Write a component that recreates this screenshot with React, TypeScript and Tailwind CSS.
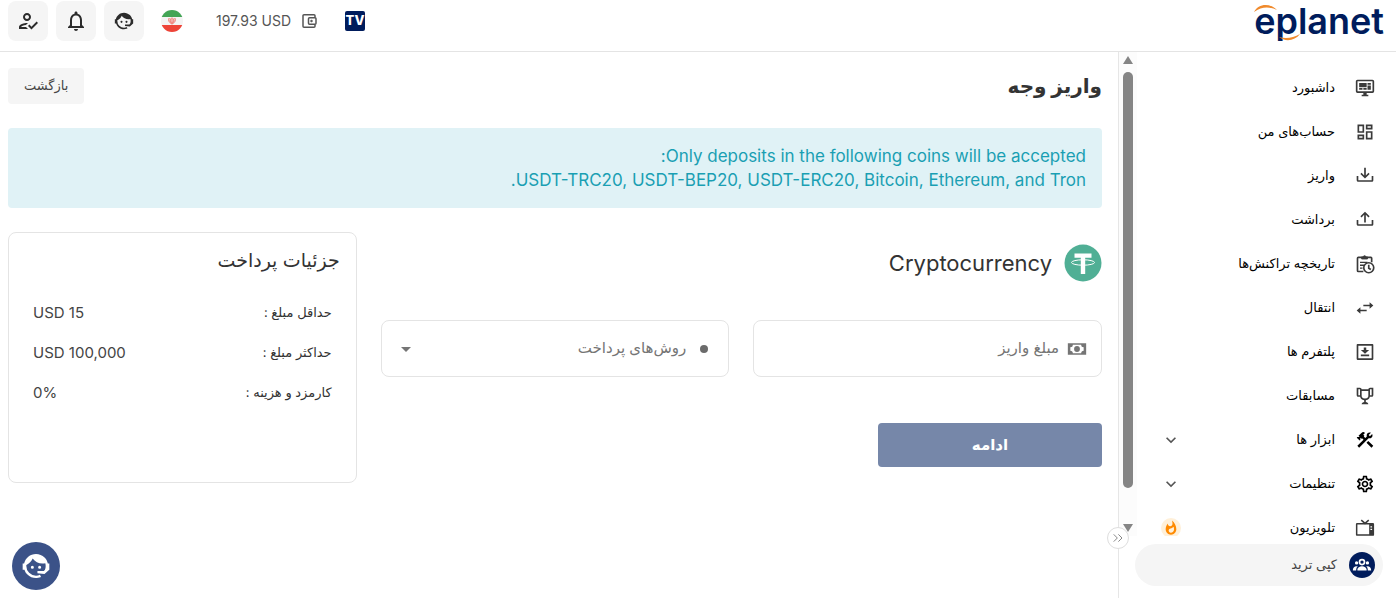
import type { ReactNode } from "react";
import {
  MdArrowDropDown,
  MdConstruction,
  MdExpandMore,
  MdNotificationsNone,
  MdOutlineDashboard,
  MdOutlineHowToReg,
  MdOutlineSettings,
  MdWhatshot,
} from "react-icons/md";
import { ChevronsRight } from "lucide-react";
import clsx from "clsx";

function MdiIcon({ d, className = "size-5" }: { d: string; className?: string }) {
  return (
    <svg viewBox="0 0 24 24" fill="currentColor" className={clsx("shrink-0", className)} aria-hidden="true">
      <path d={d} />
    </svg>
  );
}

const PATHS = {
  monitor:
    "M21 16V4H3v12h18m0-14a2 2 0 0 1 2 2v12a2 2 0 0 1-2 2h-7v2h2v2H8v-2h2v-2H3a2 2 0 0 1-2-2V4c0-1.110.9-2 2-2h18M5 6h9v5H5V6m10 0h4v2h-4V6m4 3v5h-4V9h4M5 12h4v2H5v-2m5 0h4v2h-4v-2z",
  trayDown:
    "M2 12h2v5h16v-5h2v5c0 1.110-.89 2-2 2H4a2 2 0 0 1-2-2v-5m10 3l5.550-5.460l-1.420-1.410L13 11.250V2h-2v9.250L7.880 8.130L6.460 9.550L12 15z",
  trayUp:
    "M2 12h2v5h16v-5h2v5c0 1.110-.89 2-2 2H4a2 2 0 0 1-2-2v-5M12 2L6.460 7.460l1.420 1.420L11 5.750V15h2V5.750l3.130 3.130l1.420-1.430L12 2z",
  swap: "M22 9l-4.500-4v3H10v2h7.500v3L22 9M6.500 11L2 15l4.500 4v-3H14v-2H6.500v-3z",
  downloadBox:
    "M3 2.500h18a1 1 0 0 1 1 1v17a1 1 0 0 1-1 1H3a1 1 0 0 1-1-1v-17a1 1 0 0 1 1-1m1 2v15h16v-15H4m3 10.500h10v2H7v-2m3.500-8.500h3v3H17l-5 4.500l-5-4.500h3.500v-3z",
  trophy:
    "M18 2c-.9 0-2 1-2 2H8c0-1-1.100-2-2-2H2v9c0 1 1 2 2 2h2.200c.4 2 1.700 3.700 4.800 4v2.080C8 19.540 8 22 8 22h8s0-2.460-3-2.920V17c3.100-.3 4.400-2 4.800-4H20c1 0 2-1 2-2V2h-4M6 11H4V4h2v7m10 .5c0 1.930-.58 3.500-4 3.500c-3.410 0-4-1.570-4-3.500V6h8v5.500m4-.5h-2V4h2v7z",
  cash: "M1 5h22v14H1V5m6 2a3 3 0 0 1-3 3v4a3 3 0 0 1 3 3h10a3 3 0 0 1 3-3v-4a3 3 0 0 1-3-3H7m5 1.500a3.500 3.500 0 1 1 0 7a3.500 3.500 0 0 1 0-7z",
  faceAgent:
    "M18.72,14.76C19.07,13.91 19.26,13 19.26,12C19.26,11.28 19.15,10.59 18.96,9.95C18.31,10.1 17.63,10.18 16.92,10.18C13.86,10.18 11.15,8.67 9.5,6.34C8.61,8.5 6.91,10.26 4.77,11.22C4.73,11.47 4.73,11.74 4.73,12A7.27,7.27 0 0,0 12,19.27C13.05,19.27 14.06,19.04 14.97,18.63C15.54,19.72 15.8,20.26 15.78,20.26C14.14,20.81 12.87,21.08 12,21.08C9.58,21.08 7.27,20.13 5.57,18.42C4.53,17.38 3.76,16.11 3.33,14.73H2V10.18H3.09C3.93,6.04 7.6,2.92 12,2.92C14.4,2.92 16.71,3.87 18.42,5.58C19.69,6.84 20.54,8.45 20.89,10.18H22V14.73H21.94L18.38,18L13.08,17.4V15.73H17.91L18.72,14.76M9.27,11.77A1.14,1.14 0 1,1 9.27,14.05A1.14,1.14 0 1,1 9.27,11.77M14.72,11.77A1.14,1.14 0 1,1 14.72,14.05A1.14,1.14 0 1,1 14.72,11.77Z",
};

function ClipboardClock() {
  return (
    <svg viewBox="0 0 24 24" fill="none" stroke="currentColor" strokeWidth="2" className="size-5 shrink-0" aria-hidden="true">
      <path d="M10 21H4a1 1 0 0 1-1-1V5a1 1 0 0 1 1-1h15a1 1 0 0 1 1 1v5" />
      <path d="M8 6V3.500h2a1.500 1.500 0 0 1 3 0h2V6z" fill="currentColor" strokeWidth="1" />
      <path d="M6 10h9M6 13.500h5M6 17h3" strokeWidth="1.600" />
      <circle cx="16.500" cy="16.500" r="6" />
      <path d="M16.500 13v4l2.500 1.500" />
    </svg>
  );
}

function RetroTv() {
  return (
    <svg viewBox="0 0 24 24" fill="none" stroke="currentColor" strokeWidth="1.800" className="size-5 shrink-0" aria-hidden="true">
      <rect x="2" y="7" width="20" height="13.500" rx="0.500" />
      <path d="M7.500 2.500l4.500 4l4.500-4" />
      <path d="M17 7h5v13.500h-5z" fill="currentColor" stroke="none" />
      <path d="M18.500 10.500h2M18.500 13.500h2" stroke="#fff" strokeWidth="1.500" />
    </svg>
  );
}

function GroupIcon() {
  return (
    <svg viewBox="0 0 24 24" fill="currentColor" className="size-5" aria-hidden="true">
      <circle cx="12" cy="8.500" r="3" fill="none" stroke="currentColor" strokeWidth="2" />
      <circle cx="5.500" cy="9.500" r="2" />
      <circle cx="18.500" cy="9.500" r="2" />
      <path d="M6.500 18.500v-1c0-2.500 2.500-4 5.500-4s5.500 1.500 5.500 4v1z" />
      <path d="M1 18.500c0-3 1.500-5.500 6-5c-1.500 1.300-2 3-2 5zM23 18.500c0-3-1.500-5.500-6-5c1.500 1.300 2 3 2 5z" />
    </svg>
  );
}

function WalletIcon() {
  return (
    <svg viewBox="0 0 16 16" fill="none" stroke="currentColor" strokeWidth="1.500" className="size-4" aria-hidden="true">
      <path d="M14 4.500V2.800a1 1 0 0 0-1-1H3a1 1 0 0 0-1 1v10.400a1 1 0 0 0 1 1h10a1 1 0 0 0 1-1v-1.700" />
      <rect x="7.500" y="4.700" width="7.500" height="6.600" rx="1" />
      <circle cx="10.500" cy="8" r="1" fill="currentColor" strokeWidth="0.500" />
    </svg>
  );
}

function IranFlag() {
  return (
    <svg viewBox="0 0 24 24" className="size-6" role="img" aria-label="Iran">
      <clipPath id="flag">
        <circle cx="12" cy="12" r="11" />
      </clipPath>
      <g clipPath="url(#flag)">
        <path fill="#f4f4f4" d="M0 0h24v24H0z" />
        <path fill="#43a556" d="M0 0h24v8H0z" />
        <path fill="#ee4438" d="M0 16h24v8H0z" />
        <path
          d="M12 8.500v7M9.200 9c-1.200 2 0 5 2.300 5.500M14.800 9c1.200 2 0 5-2.300 5.500M10.800 9.500c-.9 1.500-.6 3 .6 4M13.200 9.500c.9 1.500.6 3-.6 4"
          stroke="#ee5a50"
          strokeWidth="0.900"
          fill="none"
        />
      </g>
    </svg>
  );
}

function TetherIcon() {
  return (
    <svg viewBox="0 0 38 38" className="size-[38px] shrink-0" aria-hidden="true">
      <circle cx="19" cy="19" r="18.500" fill="#50af95" />
      <path d="M10.500 9.500h17v4.300h-6.300V30h-4.400V13.800h-6.300z" fill="#fff" />
      <ellipse cx="19" cy="18.500" rx="11.500" ry="2.700" fill="none" stroke="#fff" strokeWidth="1" />
    </svg>
  );
}

function Logo() {
  return (
    <a href="/" className="relative block text-4xl leading-10 font-semibold text-[#001c5c]" dir="ltr">
      eplanet
      <svg viewBox="0 0 128 40" className="absolute top-0 left-0 h-10 w-32" fill="none" aria-hidden="true">
        <path d="M0 11C4 3 15 1 23 9C15 5.500 8 5.500 0 11z" fill="#f08a2c" />
        <path d="M25 36C31 41 41 40 46 33C39 37 32 38 25 36z" fill="#f08a2c" />
      </svg>
    </a>
  );
}

type NavItem = { label: string; icon: ReactNode; expandable?: boolean; hot?: boolean };

const NAV: NavItem[] = [
  { label: "داشبورد", icon: <MdiIcon d={PATHS.monitor} /> },
  { label: "حساب‌های من", icon: <MdOutlineDashboard className="size-5" /> },
  { label: "واریز", icon: <MdiIcon d={PATHS.trayDown} /> },
  { label: "برداشت", icon: <MdiIcon d={PATHS.trayUp} /> },
  { label: "تاریخچه تراکنش‌ها", icon: <ClipboardClock /> },
  { label: "انتقال", icon: <MdiIcon d={PATHS.swap} /> },
  { label: "پلتفرم ها", icon: <MdiIcon d={PATHS.downloadBox} /> },
  { label: "مسابقات", icon: <MdiIcon d={PATHS.trophy} /> },
  { label: "ابزار ها", icon: <MdConstruction className="size-5 text-black" />, expandable: true },
  { label: "تنظیمات", icon: <MdOutlineSettings className="size-5 text-black" />, expandable: true },
  { label: "تلویزیون", icon: <RetroTv />, hot: true },
];

const DETAILS = [
  { label: "حداقل مبلغ :", value: "USD 15" },
  { label: "حداکثر مبلغ :", value: "USD 100,000" },
  { label: "کارمزد و هزینه :", value: "0%" },
];

function HeaderButton({ label, children }: { label: string; children: ReactNode }) {
  return (
    <button
      type="button"
      aria-label={label}
      className="flex size-10 items-center justify-center rounded-lg bg-[#f5f5f5] text-[#2b2b2b]"
    >
      {children}
    </button>
  );
}

function Header() {
  return (
    <header className="flex shrink-0 items-center justify-between border-b border-[#e4e4e4] pt-px pr-3 pb-2.5 pl-2">
      <Logo />
      <div className="flex items-center gap-2" dir="ltr">
        <HeaderButton label="پروفایل">
          <MdOutlineHowToReg className="size-6" />
        </HeaderButton>
        <HeaderButton label="اعلان‌ها">
          <MdNotificationsNone className="size-6" />
        </HeaderButton>
        <HeaderButton label="پشتیبانی">
          <MdiIcon d={PATHS.faceAgent} className="size-[22px]" />
        </HeaderButton>
        <button type="button" aria-label="زبان" className="mx-2">
          <IranFlag />
        </button>
        <a href="#wallet" className="ml-4 flex items-center gap-2.5 text-sm text-[#555]">
          197.93 USD
          <WalletIcon />
        </a>
        <a
          href="#tv"
          className="ml-5 flex size-5 items-center justify-center rounded-xs bg-[#001c5c] text-[13px] font-extrabold text-white"
        >
          TV
        </a>
      </div>
    </header>
  );
}

function Sidebar() {
  return (
    <aside className="relative flex w-[278px] shrink-0 flex-col border-l border-[#e6e6e6]">
      <div className="flex min-h-0 flex-1" dir="ltr">
        {/* Scroll track */}
        <div className="flex w-[18px] shrink-0 flex-col items-center justify-between bg-[#fcfcfc] py-1 text-[#858585]">
          <svg viewBox="0 0 12 8" className="h-2 w-3" fill="currentColor" aria-hidden="true">
            <path d="M6 0l5 8H1z" />
          </svg>
          <div className="mt-2 mb-9 w-2.5 flex-1 rounded-full bg-[#858585]" />
          <svg viewBox="0 0 12 8" className="h-2 w-3" fill="currentColor" aria-hidden="true">
            <path d="M1 0h10l-5 8z" />
          </svg>
        </div>
        <nav className="min-w-0 flex-1 overflow-hidden pt-3.5" dir="rtl">
          <ul>
            {NAV.map(({ label, icon, expandable, hot }) => (
              <li key={label}>
                <a href="#" className="flex h-11 items-center gap-5 pr-[21px] pl-6 text-[13px] text-black">
                  <span className="text-[#3a3a3a]">{icon}</span>
                  <span className="flex-1">{label}</span>
                  {expandable && <MdExpandMore className="size-5 text-[#555]" />}
                  {hot && (
                    <span className="flex size-5 items-center justify-center rounded-full bg-[#fff0d9] text-[#ff8a00]">
                      <MdWhatshot className="size-4" />
                    </span>
                  )}
                </a>
              </li>
            ))}
          </ul>
        </nav>
      </div>

      <div className="pt-2 pr-[13px] pb-3 pl-4">
        <a href="#copy-trade" className="flex h-[42px] items-center gap-3 rounded-full bg-[#f5f5f5] pr-2 text-[13px] text-[#444]">
          <span className="flex size-[26px] items-center justify-center rounded-full bg-[#001c5c] text-white">
            <GroupIcon />
          </span>
          کپی ترید
        </a>
      </div>

      <button
        type="button"
        aria-label="بستن منو"
        className="absolute bottom-[49px] -left-3 flex size-[22px] items-center justify-center rounded-full border border-[#dedede] bg-white text-[#888]"
      >
        <ChevronsRight className="size-4 shrink-0" strokeWidth={1.5} />
      </button>
    </aside>
  );
}

function DepositForm() {
  return (
    <form className="col-span-2 pt-3">
      <h2 className="flex items-center gap-3 text-[22px] text-[#333]">
        <TetherIcon />
        Cryptocurrency
      </h2>
      <div className="mt-[38px] grid grid-cols-2 gap-6">
        <label className="flex h-[57px] items-center gap-2 rounded-lg border border-[#e4e4e4] px-3.5 text-[#757575]">
          <MdiIcon d={PATHS.cash} />
          <input
            type="text"
            aria-label="مبلغ واریز"
            placeholder="مبلغ واریز"
            className="min-w-0 flex-1 bg-transparent text-[15px] outline-none placeholder:text-[#757575]"
          />
        </label>
        <label className="flex h-[57px] items-center gap-3.5 rounded-lg border border-[#e4e4e4] px-5 text-[#757575]">
          <span className="size-2 rounded-full bg-[#6b6b6b]" />
          <select
            aria-label="روش‌های پرداخت"
            className="min-w-0 flex-1 appearance-none bg-transparent text-[15px] outline-none"
          >
            <option>روش‌های پرداخت</option>
          </select>
          <MdArrowDropDown className="-ml-2 size-6" />
        </label>
      </div>
      <button type="button" className="mt-[46px] h-11 w-56 rounded-sm bg-[#7687a9] text-[15px] font-bold text-white">
        ادامه
      </button>
    </form>
  );
}

export default function App() {
  return (
    <div
      dir="rtl"
      lang="fa"
      className="flex h-screen flex-col overflow-hidden bg-white font-[Inter,'DejaVu_Sans',sans-serif] text-[#333]"
    >
      <Header />
      <div className="flex min-h-0 flex-1">
        <Sidebar />
        <main className="min-w-0 flex-1 pt-4 pr-4 pl-2">
          <div className="flex items-center justify-between">
            <h1 className="text-xl font-bold">واریز وجه</h1>
            <button type="button" className="h-9 rounded-sm bg-[#f5f5f5] px-4 text-[13px] text-[#444]">
              بازگشت
            </button>
          </div>

          <div className="mt-6 rounded-sm bg-[#e0f2f6] p-4 text-[17px] leading-6 text-[#1a9fb3]">
            <p>Only deposits in the following coins will be accepted:</p>
            <p>USDT-TRC20, USDT-BEP20, USDT-ERC20, Bitcoin, Ethereum, and Tron.</p>
          </div>

          <div className="mt-6 grid grid-cols-3 gap-6">
            <DepositForm />
            <section className="min-h-[251px] rounded-lg border border-[#e4e4e4] p-4">
              <h2 className="text-[19px] leading-6">جزئیات پرداخت</h2>
              <dl className="mt-5 px-2">
                {DETAILS.map(({ label, value }) => (
                  <div key={label} className="flex h-10 items-center justify-between">
                    <dt className="text-[13px]">{label}</dt>
                    <dd className="text-[15px] text-[#444]" dir="ltr">
                      {value}
                    </dd>
                  </div>
                ))}
              </dl>
            </section>
          </div>
        </main>
      </div>

      {/* Support chat */}
      <button
        type="button"
        aria-label="گفتگو با پشتیبانی"
        className="fixed bottom-2 left-3 flex size-12 items-center justify-center rounded-full bg-[#3b5288] text-white"
      >
        <MdiIcon d={PATHS.faceAgent} className="size-8" />
      </button>
    </div>
  );
}
